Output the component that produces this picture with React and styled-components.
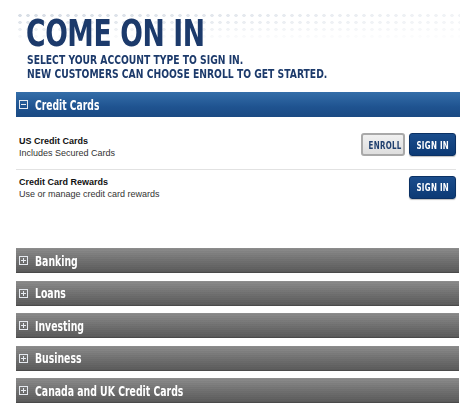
import styled, { createGlobalStyle } from 'styled-components';

const GlobalStyle = createGlobalStyle`
  body {
    margin: 0;
    background: #ffffff;
    font-family: "Liberation Sans", Arial, sans-serif;
  }
`;

const condensed = `"DejaVu Sans Condensed", "Liberation Sans", sans-serif`;

// the artwork uses a very narrow grotesque; squeeze DejaVu Condensed to match
const Squeeze = styled.span`
  display: inline-block;
  white-space: nowrap;
  transform: scaleX(${(p) => p.x || 0.78});
  transform-origin: ${(p) => (p.center ? 'center' : 'left')} center;
`;

const Page = styled.div`
  width: 474px;
  padding: 12px 14px 0 16px;
  box-sizing: border-box;
`;

const Hero = styled.div`
  position: relative;
  padding: 3px 0 11px 10px;

  &::before {
    content: '';
    position: absolute;
    left: 0;
    right: 0;
    top: 0;
    height: 26px;
    background-image: radial-gradient(circle, #d8dee6 1.5px, transparent 1.9px);
    background-size: 8px 7px;
    -webkit-mask-image: linear-gradient(to bottom, #000 20%, rgba(0,0,0,0.15)),
      linear-gradient(to right, #000, rgba(0,0,0,0.35));
    -webkit-mask-composite: source-in;
    mask-image: linear-gradient(to bottom, #000 20%, rgba(0,0,0,0.15)),
      linear-gradient(to right, #000, rgba(0,0,0,0.35));
    mask-composite: intersect;
  }
`;

const Title = styled.h1`
  position: relative;
  margin: 0;
  font-family: ${condensed};
  font-weight: 700;
  font-size: 37px;
  line-height: 37px;
  color: #1c3a6b;
  letter-spacing: -0.5px;
`;

const Subtitle = styled.p`
  position: relative;
  margin: 1px 0 0 1px;
  font-family: ${condensed};
  font-weight: 700;
  font-size: 12.5px;
  line-height: 14px;
  color: #1c3a6b;
`;

const Bar = styled.div`
  height: 25px;
  display: flex;
  align-items: center;
  gap: 7px;
  padding-left: 3px;
  box-sizing: border-box;
  color: #ffffff;
  font-family: ${condensed};
  font-weight: 700;
  font-size: 14px;
  background: ${(p) =>
    p.open
      ? 'linear-gradient(#346ea9, #1f5390 60%, #1b4a83)'
      : 'repeating-linear-gradient(transparent 0 1px, rgba(0,0,0,0.03) 1px 2px), linear-gradient(#8d8d8d, #6f6f6f 55%, #5a5a5a)'};
  box-shadow: ${(p) => (p.open ? 'none' : 'inset 0 -1px 0 #4a4a4a')};
`;

const Toggle = styled.svg`
  flex: none;
  width: 9px;
  height: 9px;
`;

const Icon = ({ plus }) => (
  <Toggle viewBox="0 0 9 9">
    <rect x="0.5" y="0.5" width="8" height="8" fill="none" stroke="#e6eaf0" strokeWidth="1" />
    <line x1="2" y1="4.5" x2="7" y2="4.5" stroke="#e6eaf0" strokeWidth="1" />
    {plus && <line x1="4.5" y1="2" x2="4.5" y2="7" stroke="#e6eaf0" strokeWidth="1" />}
  </Toggle>
);

const Panel = styled.div`
  padding: 0 4px 0 0;
  height: 131px;
`;

const Row = styled.div`
  display: flex;
  align-items: center;
  justify-content: space-between;
  padding: ${(p) => p.top}px 0 0 3px;
  box-sizing: border-box;
  height: ${(p) => p.h}px;
  border-bottom: ${(p) => (p.last ? 'none' : '1px solid #e2e2e2')};
`;

const Info = styled.div`
  padding-top: ${(p) => p.shift}px;
  font-size: 9px;
  line-height: 12px;
  color: #333333;
`;

const Name = styled.div`
  font-weight: 700;
  color: #111111;
`;

const Actions = styled.div`
  display: flex;
  gap: 4px;
`;

const Button = styled.button`
  height: 23px;
  padding: 0;
  width: ${(p) => (p.enroll ? 44 : 47)}px;
  border-radius: 3px;
  font-family: ${condensed};
  font-weight: 700;
  font-size: 10.5px;
  letter-spacing: 0.4px;
  cursor: pointer;
  color: ${(p) => (p.enroll ? '#1f3f6e' : '#ffffff')};
  border: ${(p) => (p.enroll ? '2px solid #a9a9a9' : '1px solid #0b3164')};
  background: ${(p) =>
    p.enroll ? 'linear-gradient(#f0f0f0, #dedede)' : 'linear-gradient(#1b4d8c, #0c3a75)'};
  box-shadow: ${(p) => (p.enroll ? 'none' : '0 1px 1px rgba(0,0,0,0.25)')};
`;

const Groups = styled.div`
  display: flex;
  flex-direction: column;
  gap: 7.5px;
  margin-right: 1px;
`;

const products = [
  { name: 'US Credit Cards', desc: 'Includes Secured Cards', enroll: true, h: 53, top: 3, shift: 4 },
  { name: 'Credit Card Rewards', desc: 'Use or manage credit card rewards', enroll: false, h: 34, top: 0, shift: 1 },
];

const groups = ['Banking', 'Loans', 'Investing', 'Business', 'Canada and UK Credit Cards'];

export default function App() {
  return (
    <Page>
      <GlobalStyle />
      <Hero>
        <Title>
          <Squeeze x={0.8}>COME ON IN</Squeeze>
        </Title>
        <Subtitle>
          <Squeeze x={0.82}>SELECT YOUR ACCOUNT TYPE TO SIGN IN.</Squeeze>
          <br />
          <Squeeze x={0.82}>NEW CUSTOMERS CAN CHOOSE ENROLL TO GET STARTED.</Squeeze>
        </Subtitle>
      </Hero>
      <Bar open>
        <Icon />
        <Squeeze x={0.73}>Credit Cards</Squeeze>
      </Bar>
      <Panel>
        {products.map((p, i) => (
          <Row key={p.name} h={p.h} top={p.top} last={i === products.length - 1}>
            <Info shift={p.shift}>
              <Name>{p.name}</Name>
              {p.desc}
            </Info>
            <Actions>
              {p.enroll && (
                <Button enroll>
                  <Squeeze x={0.75} center>ENROLL</Squeeze>
                </Button>
              )}
              <Button>
                <Squeeze x={0.75} center>SIGN IN</Squeeze>
              </Button>
            </Actions>
          </Row>
        ))}
      </Panel>
      <Groups>
        {groups.map((g) => (
          <Bar key={g}>
            <Icon plus />
            <Squeeze x={0.74}>{g}</Squeeze>
          </Bar>
        ))}
      </Groups>
    </Page>
  );
}
